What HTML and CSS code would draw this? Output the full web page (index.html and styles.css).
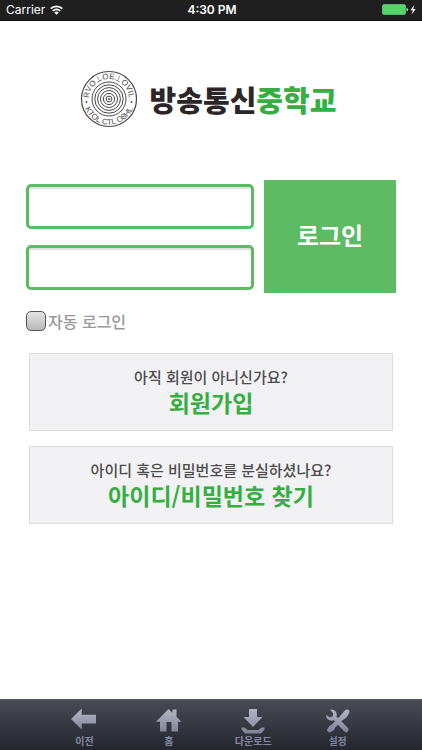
FILE: index.html
```html
<!DOCTYPE html>
<html lang="ko">
<head>
<meta charset="utf-8">
<meta name="viewport" content="width=device-width, initial-scale=1">
<title>방송통신중학교</title>
<link rel="stylesheet" href="styles.css">
</head>
<body>
<header class="status">
  <div class="status-left">
    <span>Carrier</span>
    <svg width="13" height="10" viewBox="0 0 13 10" fill="none" stroke="#fff" stroke-width="1.7">
      <path d="M.7 3.7a8.2 8.2 0 0 1 11.6 0M2.8 6a5.2 5.2 0 0 1 7.4 0"/>
      <path d="M6.5 9.8 4.3 7.5a3.1 3.1 0 0 1 4.4 0z" fill="#fff" stroke="none"/>
    </svg>
  </div>
  <time class="status-time">4:30 PM</time>
  <div class="status-right">
    <svg width="36" height="12" viewBox="0 0 36 12">
      <rect x=".5" y=".5" width="23" height="10" rx="1.5" fill="#53d769" stroke="#8be39a" stroke-width=".5"/>
      <path d="M24.5 3.8q1.6.3 1.6 1.9t-1.6 1.9z" fill="#a9e8b3"/>
      <path d="M32.3 1 28.4 6.3h2.4L29.7 10.4 33.7 5h-2.5z" fill="#fff"/>
    </svg>
  </div>
</header>

<main class="page">
  <h1 class="brand">
    <svg class="seal" width="58" height="58" viewBox="0 0 58 58" aria-hidden="true">
      <defs>
        <path id="arc-top" d="M10.900 37.500a20 20 0 1 1 36.200 0"/>
        <path id="arc-bottom" d="M4.300 36a25.700 25.700 0 0 0 49.400 0"/>
      </defs>
      <g fill="none" stroke="#48484a">
        <circle cx="29" cy="29" r="27.500" stroke-width="1.200"/>
        <circle cx="29" cy="29" r="17"/>
        <circle cx="29" cy="29" r="14.200"/>
        <circle cx="29" cy="29" r="11.400"/>
        <circle cx="29" cy="29" r="8.500"/>
        <circle cx="29" cy="29" r="5.600"/>
        <circle cx="29" cy="29" r="2.900"/>
      </g>
      <circle cx="29" cy="29" r="1" fill="#48484a"/>
      <circle cx="6.500" cy="32" r=".9" fill="#48484a"/>
      <circle cx="51.500" cy="32" r=".9" fill="#48484a"/>
      <g class="seal-text">
        <text><textPath href="#arc-top" startOffset="50%">RVO⊥OE⊥OVIL</textPath></text>
        <text><textPath href="#arc-bottom" startOffset="50%">KTOL CTL O8HL</textPath></text>
      </g>
    </svg>
    <span class="brand-name">방송통신<span class="brand-accent">중학교</span></span>
  </h1>

  <form class="login">
    <div class="login-grid">
      <div class="fields">
        <input class="field" type="text" aria-label="아이디">
        <input class="field" type="password" aria-label="비밀번호">
      </div>
      <button class="login-button" type="button">로그인</button>
    </div>
    <label class="auto"><input class="auto-box" type="checkbox">자동 로그인</label>
  </form>

  <nav class="links">
    <a class="link-card" href="#join">아직 회원이 아니신가요?<strong class="link-title">회원가입</strong></a>
    <a class="link-card" href="#find">아이디 혹은 비밀번호를 분실하셨나요?<strong class="link-title">아이디/비밀번호 찾기</strong></a>
  </nav>
</main>

<nav class="toolbar">
  <svg class="defs" width="0" height="0" aria-hidden="true">
    <defs>
      <linearGradient id="metal" gradientUnits="userSpaceOnUse" x1="0" y1="0" x2="0" y2="26">
        <stop offset="0" stop-color="#b4b7c5"/><stop offset="1" stop-color="#7d8194"/>
      </linearGradient>
    </defs>
  </svg>
  <a class="tool" href="#back">
    <svg width="26" height="26" viewBox="0 0 26 26" fill="url(#metal)"><path d="M0 11 10.700 .600V6.800H25V15.500H10.700V21.400z"/></svg>
    이전
  </a>
  <a class="tool" href="#home">
    <svg width="26" height="26" viewBox="0 0 26 26" fill="url(#metal)"><path d="M12.500 1 16.500 4.900V1.500h4v7.300l5 4.900H22V23.500h-6.500V14h-5v9.500H4V13.700H0z"/></svg>
    홈
  </a>
  <a class="tool" href="#download">
    <svg width="26" height="26" viewBox="0 0 26 26" fill="url(#metal)"><path d="M9 1h8v8h5.500L13 19 3.500 9H9zM1.500 19.500h3L7.500 22h11l3-2.500h3v2L21 25.500H5L1.500 21.500z"/></svg>
    다운로드
  </a>
  <a class="tool" href="#settings">
    <svg width="26" height="26" viewBox="0 0 26 26" fill="url(#metal)">
      <path d="M5 1.500Q9.500 1 11.300 4.500 12 6.500 11.500 8.500L23.300 20.300Q24.500 22.500 22.500 24 21 25 19.300 23.500L8.800 12.300Q4.500 13.500 2 10.500 1 9 1.200 7L4.500 9.300 7.500 8.600 8.300 5.600z"/>
      <path d="M19.500 2.800Q21.500 1 23.600 1.700 25.200 3 24 5.500L21.500 9.500 17 12.700 9.800 20 9 22 4.500 24.800 1.800 22.300 4.500 17.800 6.500 17 13.800 9.600z"/>
    </svg>
    설정
  </a>
</nav>
</body>
</html>
```
FILE: styles.css
```css
* { box-sizing: border-box; }

body {
  display: flex;
  flex-direction: column;
  min-height: 100vh;
  margin: 0;
  background: #fff;
  font-family: "Noto Sans CJK KR", sans-serif;
}

a { color: inherit; text-decoration: none; }

.status {
  display: grid;
  grid-template-columns: 1fr auto 1fr;
  align-items: center;
  height: 21px;
  padding: 0 4px 0 6px;
  background: #1f1f1f;
  border-bottom: 1px solid #111;
  color: #fff;
  font: 12px/20px Inter, sans-serif;
}
.status-left { display: flex; align-items: center; gap: 5px; }
.status-time { font-weight: 600; }
.status-right { display: flex; justify-content: flex-end; }

.page { flex: 1; }

.brand {
  display: flex;
  align-items: center;
  justify-content: center;
  gap: 12px;
  margin: 49px 6px 0 0;
}
.seal-text {
  fill: #48484a;
  font: 8px "Liberation Sans", "DejaVu Sans", sans-serif;
  text-anchor: middle;
}
.brand-name {
  color: #2b2728;
  font-size: 29px;
  font-weight: 900;
  line-height: 58px;
}
.brand-accent { color: #36ae41; }

.login { padding: 52px 26px 0; }
.login-grid {
  display: grid;
  grid-template-columns: 19fr 11fr;
  gap: 10px;
}
.fields {
  display: flex;
  flex-direction: column;
  gap: 16px;
  padding: 4px 0 3px;
}
.field {
  width: 100%;
  height: 45px;
  padding: 0 10px;
  background: #fff;
  border: 3px solid #5dbb63;
  border-radius: 5px;
  box-shadow: inset 0 2px 1px #dcdfdc;
  font: 16px "Noto Sans CJK KR", sans-serif;
}
.login-button {
  padding: 0 0 4px;
  border: 0;
  background: #5dbb63;
  color: #fff;
  font: 700 24px "Noto Sans CJK KR", sans-serif;
}
.auto {
  display: flex;
  align-items: center;
  gap: 2px;
  margin-top: 16px;
  color: #999;
  font-size: 16px;
  font-weight: 500;
  line-height: 24px;
}
.auto-box {
  appearance: none;
  width: 20px;
  height: 20px;
  margin: 0;
  border: 1px solid #555;
  border-radius: 5px;
  background: linear-gradient(#e4e4e4, #b8b8b8);
}

.links {
  display: flex;
  flex-direction: column;
  gap: 15px;
  padding: 20px 29px;
}
.link-card {
  display: flex;
  flex-direction: column;
  align-items: center;
  padding: 12px 0 14px;
  border: 1px solid #dcdcde;
  background: #f2f2f5;
  color: #4c4c4c;
  font-size: 15px;
  font-weight: 500;
  line-height: 22px;
}
.link-title {
  color: #36ae41;
  font-size: 23px;
  font-weight: 700;
  line-height: 28px;
}

.toolbar {
  display: grid;
  grid-template-columns: repeat(4, 1fr);
  height: 51px;
  padding: 8px 10% 0;
  border-top: 1px solid #5a5c64;
  background: linear-gradient(#484a55, #24262e);
}
.defs { position: absolute; }
.tool {
  display: flex;
  flex-direction: column;
  align-items: center;
  color: #8487a0;
  font-size: 10px;
  font-weight: 700;
  line-height: 14px;
}
```
